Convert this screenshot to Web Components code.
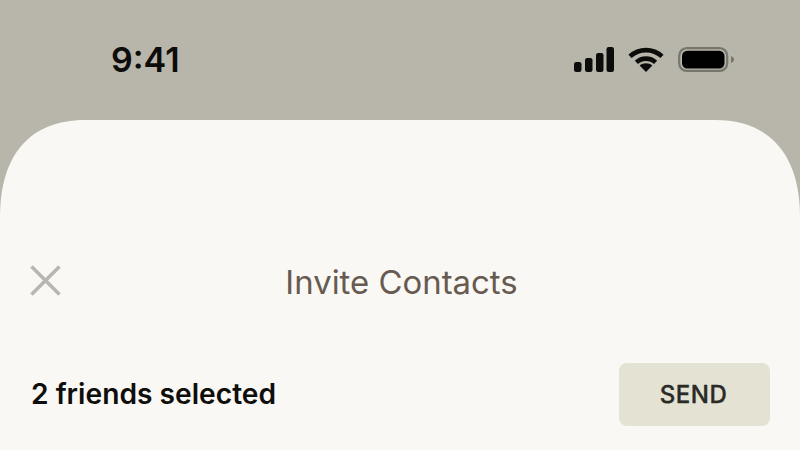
<!DOCTYPE html>
<html>
<head>
<meta charset="utf-8">
<style>
  html, body { margin: 0; height: 100%; overflow: hidden; background: #b8b6aa; font-family: Inter, "Noto Sans", sans-serif; }
  body { display: flex; flex-direction: column; }
</style>
</head>
<body>
<status-bar time="9:41"></status-bar>
<invite-sheet heading="Invite Contacts" summary="2 friends selected" action="SEND"></invite-sheet>

<script>
// Status bar with clock and signal / wifi / battery icons
class StatusBar extends HTMLElement {
  constructor() {
    super();
    this.attachShadow({ mode: 'open' });
  }

  connectedCallback() {
    this.shadowRoot.innerHTML = `
      <style>
        :host { display: flex; align-items: flex-start; justify-content: space-between; height: 120px; padding: 39px 66px 0 111px; box-sizing: border-box; flex: none; }
        .time { font-size: 34px; line-height: 42px; font-weight: 600; color: #0c0c0a; }
        .icons { display: flex; gap: 14px; padding-top: 8px; }
        svg { display: block; }
      </style>
      <span class="time">${this.getAttribute('time')}</span>
      <div class="icons">
        <svg width="40" height="25" viewBox="0 0 40 25" fill="#0c0c0a">
          <rect x="0" y="15" width="7.5" height="10" rx="2.2"/>
          <rect x="11" y="11" width="7.5" height="14" rx="2.2"/>
          <rect x="22" y="6" width="7.5" height="19" rx="2.2"/>
          <rect x="32.5" y="0" width="7.5" height="25" rx="2.2"/>
        </svg>
        <svg width="36" height="25" viewBox="0 0 36 25" fill="none" stroke="#0c0c0a" stroke-width="4.6">
          <path d="M2 9.4C11 1 25 1 34 9.4"/>
          <path d="M8.4 15.4C13.8 10.4 22.2 10.4 27.6 15.4"/>
          <path d="M18 25L11.6 18.6C15 15.4 21 15.4 24.4 18.6Z" fill="#0c0c0a" stroke="none"/>
        </svg>
        <svg width="56" height="25" viewBox="0 0 56 25">
          <rect x="1.2" y="1.2" width="48" height="22.6" rx="7.5" fill="none" stroke="#77766d" stroke-width="2.2"/>
          <rect x="4" y="3.8" width="42.5" height="17.6" rx="5.2" fill="#000"/>
          <path d="M53 9C55 9.8 56 11 56 12.5C56 14 55 15.2 53 16Z" fill="#77766d"/>
        </svg>
      </div>
    `;
  }
}

// Bottom sheet: title row, then selection summary with action button
class InviteSheet extends HTMLElement {
  constructor() {
    super();
    this.attachShadow({ mode: 'open' });
  }

  connectedCallback() {
    this.shadowRoot.innerHTML = `
      <style>
        :host { display: block; flex: 1; background: #faf8f4; padding: 140px 30px 0 30px; box-sizing: border-box;
          clip-path: path('M0 330V97C0 35 30 0 85 0H715C770 0 800 35 800 97V330Z'); }
        .title-row { position: relative; display: flex; align-items: center; justify-content: center; height: 44px; }
        .close { position: absolute; left: 0; top: 5px; display: block; }
        h1 { margin: 0; font-size: 32.9px; line-height: 44px; font-weight: 400; color: #675a50; padding-left: 3px; }
        .select-row { display: flex; align-items: center; justify-content: space-between; margin-top: 59px; padding-left: 2px; }
        .summary { font-size: 28.2px; font-weight: 600; line-height: 34px; color: #0e0e0c; margin: 0 0 2px -1px; }
        button { width: 151px; height: 63px; border: none; border-radius: 8px; background: #e3e2d3; color: #2a2a26; font: 500 24px Inter, "Noto Sans", sans-serif; letter-spacing: 0.5px; padding: 0 2px 0 0; -webkit-text-stroke: 0.35px #2a2a26; }
      </style>
      <div class="title-row">
        <svg class="close" width="31" height="31" viewBox="0 0 31 31" stroke="#b7b7b2" stroke-width="3.6" fill="none">
          <path d="M1.5 1.5L29.5 29.5M29.5 1.5L1.5 29.5"/>
        </svg>
        <h1>${this.getAttribute('heading')}</h1>
      </div>
      <div class="select-row">
        <span class="summary">${this.getAttribute('summary')}</span>
        <button>${this.getAttribute('action')}</button>
      </div>
    `;
  }
}

customElements.define('status-bar', StatusBar);
customElements.define('invite-sheet', InviteSheet);
</script>
</body>
</html>
